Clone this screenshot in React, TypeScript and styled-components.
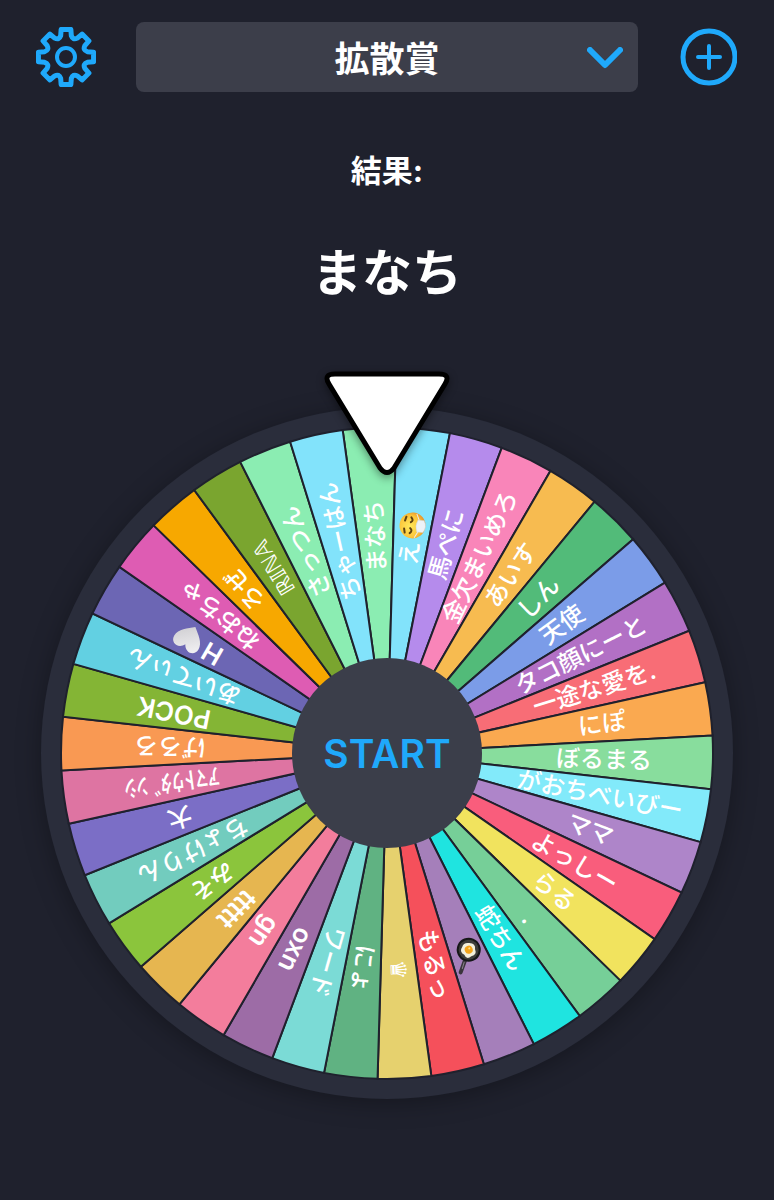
import React, { useState } from "react";
import styled, { createGlobalStyle } from "styled-components";

type Symbol = "mask" | "pan" | "heart";

interface Entry {
  label: string;
  color: string;
  symbol?: Symbol;
}

// clockwise, the first one is under the pointer
const entries: Entry[] = [
  { label: "まなち", color: "#8bedb2" },
  { label: "え", color: "#82e3fb", symbol: "mask" },
  { label: "馬ぺに", color: "#b58bec" },
  { label: "金欠まいめろ", color: "#f985b9" },
  { label: "あいす", color: "#f7bb50" },
  { label: "しん", color: "#52bb79" },
  { label: "天使", color: "#7b9ce8" },
  { label: "タコ顔にーと", color: "#b270c5" },
  { label: "一途な愛を.", color: "#f86d76" },
  { label: "にぽ", color: "#faa950" },
  { label: "ぼるまる", color: "#88dd9d" },
  { label: "がおちべいびー", color: "#82eafa" },
  { label: "ママ", color: "#ae85c9" },
  { label: "よっしー", color: "#f95d7c" },
  { label: "らる", color: "#f1e35e" },
  { label: ".", color: "#76cf98" },
  { label: "蛇ちん", color: "#1fe4e0" },
  { label: "", color: "#a57fba", symbol: "pan" },
  { label: "もるっ", color: "#f5505b" },
  { label: "♛", color: "#e6d16e" },
  { label: "にょ", color: "#60b282" },
  { label: "ワード", color: "#7bdbd6" },
  { label: "oxn", color: "#9d6ca6" },
  { label: "gn", color: "#f37d9c" },
  { label: "ttttt", color: "#e6b650" },
  { label: "みそ", color: "#8bc53c" },
  { label: "ちょけりん", color: "#72ccbe" },
  { label: "大", color: "#7b6ec6" },
  { label: "ｱﾏﾄｳﾀﾞﾝｼ", color: "#de74a2" },
  { label: "げろろ", color: "#f99953" },
  { label: "POCK", color: "#84b535" },
  { label: "あいてぃん", color: "#62d0e2" },
  { label: "H", color: "#6c66b4", symbol: "heart" },
  { label: "ねおちゃ", color: "#de5cb3" },
  { label: "ろぜ", color: "#f7a800" },
  { label: "ℝ𝕀ℕ𝔸", color: "#7aa52f" },
  { label: "さっつん", color: "#8bedb2" },
  { label: "ちゃーはん", color: "#82e3fb" },
];

const STEP = 360 / entries.length;
const OFFSET = 1.66;
const RADIUS = 326;
const LABEL_RADIUS = 217;

const point = (deg: number, r: number) => {
  const rad = ((deg - 90) * Math.PI) / 180;
  return `${(Math.cos(rad) * r).toFixed(2)} ${(Math.sin(rad) * r).toFixed(2)}`;
};

const MaskFace: React.FC = () => (
  <g>
    <circle r="13" fill="url(#face)" />
    <path
      d="M-8 -2 Q-5 1 -3 -2 M3 -2 Q5 1 8 -2 M-8 -7 L-4 -8 M4 -8 L8 -7"
      fill="none"
      stroke="#5e4312"
      strokeWidth="2"
      strokeLinecap="round"
    />
    <path d="M-12 3 L-6 6 M12 3 L6 6" stroke="#e8edf3" strokeWidth="1" />
    <path d="M-6 5 Q0 2 6 5 L6 11 Q0 15 -6 11 Z" fill="#eef2f7" stroke="#cdd4dc" strokeWidth="0.5" />
  </g>
);

const Heart: React.FC = () => (
  <path
    d="M0 13 C-6 8 -14 3 -14 -5 C-14 -13 -4 -15 0 -7 C4 -15 14 -13 14 -5 C14 3 6 8 0 13 Z"
    fill="url(#heart)"
  />
);

const FryingPan: React.FC = () => (
  <g>
    <path d="M4 5 L14 14" stroke="#3a353c" strokeWidth="4" strokeLinecap="round" />
    <path d="M6 7 L11 11" stroke="#88808a" strokeWidth="1" strokeLinecap="round" />
    <circle cx="-4" cy="-2" r="11" fill="#3d3d3a" stroke="#161718" strokeWidth="2" />
    <path
      d="M-10 -5 Q-7 -11 -2 -8 Q4 -8 3 -2 Q5 4 -1 4 Q-6 8 -9 3 Q-13 0 -10 -5 Z"
      fill="#f3f0dc"
    />
    <circle cx="-4" cy="-2" r="4" fill="#f2a51b" />
    <circle cx="-5" cy="-3" r="1" fill="#ffe08a" />
  </g>
);

const symbols: Record<Symbol, React.FC> = {
  mask: MaskFace,
  heart: Heart,
  pan: FryingPan,
};

type LabelKind = "kana" | "latin" | "glyph";

const labelKind = (label: string): LabelKind => {
  if (/^[A-Za-z]+$/.test(label)) return "latin";
  return label === "♛" || label === "ℝ𝕀ℕ𝔸" ? "glyph" : "kana";
};

const Slice: React.FC<{ entry: Entry; index: number }> = ({ entry, index }) => {
  const end = OFFSET + index * STEP;
  const start = end - STEP;
  const Icon = entry.symbol && symbols[entry.symbol];
  const paired = Icon !== undefined && entry.label !== "";

  return (
    <g>
      <SlicePath
        d={`M0 0 L${point(start, RADIUS)} A${RADIUS} ${RADIUS} 0 0 1 ${point(end, RADIUS)} Z`}
        fill={entry.color}
      />
      <g transform={`rotate(${start + STEP / 2 - 90}) translate(${LABEL_RADIUS} 0)`}>
        {entry.label && (
          <SliceLabel x={paired ? -16 : 0} y={-2} $kind={labelKind(entry.label)}>
            {entry.label}
          </SliceLabel>
        )}
        {Icon && (
          <g transform={`translate(${paired ? 12 : 0} 0)`}>
            <Icon />
          </g>
        )}
      </g>
    </g>
  );
};

const GearIcon: React.FC = () => {
  // eight flat teeth with round valleys between them
  const teeth = Array.from({ length: 8 }, (_, i) => {
    const a = i * 45;
    return `L${point(a - 10, 28)} L${point(a + 10, 28)} L${point(a + 14, 22)} Q${point(
      a + 22.5,
      18
    )} ${point(a + 31, 22)}`;
  });
  return (
    <svg viewBox="-30 -30 60 60" width="60" height="60" aria-hidden="true">
      <path
        d={`M${point(-14, 22)} ${teeth.join(" ")} Z`}
        fill="none"
        stroke="currentColor"
        strokeWidth="5"
        strokeLinejoin="round"
      />
      <circle r="9" fill="none" stroke="currentColor" strokeWidth="4" />
    </svg>
  );
};

const App: React.FC = () => {
  const [roulette, setRoulette] = useState("拡散賞");

  return (
    <Page>
      <GlobalStyle />
      <Toolbar>
        <IconButton aria-label="設定">
          <GearIcon />
        </IconButton>
        <SelectWrapper>
          <RouletteSelect
            aria-label="ルーレット"
            value={roulette}
            onChange={(e) => setRoulette(e.target.value)}
          >
            <option>拡散賞</option>
          </RouletteSelect>
          <Chevron viewBox="0 0 36 22" aria-hidden="true">
            <path d="M3 3 L18 18 L33 3" />
          </Chevron>
        </SelectWrapper>
        <IconButton aria-label="追加">
          <svg viewBox="-30 -29 58 58" width="58" height="58" aria-hidden="true">
            <g fill="none" stroke="currentColor" strokeLinecap="round">
              <circle r="26" strokeWidth="5" />
              <path d="M-11 0 H11 M0 -11 V11" strokeWidth="4" />
            </g>
          </svg>
        </IconButton>
      </Toolbar>
      <ResultTitle>結果:</ResultTitle>
      <ResultName>{entries[0].label}</ResultName>
      <Wheel>
        <WheelSvg viewBox="-346 -346 692 692">
          <defs>
            <radialGradient id="face" cx="0.45" cy="0.4" r="0.6">
              <stop offset="0" stopColor="#ffe95c" />
              <stop offset="0.7" stopColor="#fcc53a" />
              <stop offset="1" stopColor="#e8962a" />
            </radialGradient>
            <linearGradient id="heart" x1="0" y1="0" x2="1" y2="1">
              <stop offset="0" stopColor="#f4f3f5" />
              <stop offset="1" stopColor="#c9c8cc" />
            </linearGradient>
          </defs>
          <Rim r="346" />
          {entries.map((entry, i) => (
            <Slice key={i} entry={entry} index={i} />
          ))}
          <Pointer d="M-52 -379 H52 Q64 -379 58 -369 L7 -285 Q0 -276 -7 -285 L-58 -369 Q-64 -379 -52 -379 Z" />
        </WheelSvg>
        <StartButton>START</StartButton>
      </Wheel>
    </Page>
  );
};

export default App;

const GlobalStyle = createGlobalStyle`
  * {
    box-sizing: border-box;
  }
  body {
    margin: 0;
    min-height: 100vh;
    background-color: #1f212d;
    color: white;
    font-family: Inter, "Noto Sans CJK JP", sans-serif;
  }
`;

const Page = styled.main`
  display: flex;
  flex-direction: column;
  align-items: center;
`;

const Toolbar = styled.header`
  width: 100%;
  display: grid;
  grid-template-columns: 60px 1fr 60px;
  align-items: center;
  gap: 40px;
  padding: 22px 36px 0;
`;

const IconButton = styled.button`
  display: flex;
  justify-content: center;
  padding: 0;
  border: 0;
  background-color: transparent;
  color: #1fa9fb;
  cursor: pointer;
`;

const SelectWrapper = styled.div`
  position: relative;
`;

const RouletteSelect = styled.select`
  display: block;
  width: 100%;
  height: 70px;
  padding: 3px 0 0;
  border: 0;
  border-radius: 8px;
  appearance: none;
  background-color: #3c3e4a;
  color: white;
  font-family: inherit;
  font-size: 35px;
  font-weight: 700;
  text-align: center;
  text-align-last: center;
`;

const Chevron = styled.svg`
  position: absolute;
  right: 15px;
  top: 25px;
  width: 36px;
  height: 22px;
  pointer-events: none;

  path {
    fill: none;
    stroke: #1fa9fb;
    stroke-width: 6px;
    stroke-linecap: round;
    stroke-linejoin: round;
  }
`;

const ResultTitle = styled.h1`
  margin: 59px 0 0;
  font-size: 31px;
  line-height: 40px;
  font-weight: 700;
`;

const ResultName = styled.p`
  margin: 52px 0 0;
  font-size: 50px;
  line-height: 60px;
  font-weight: 700;
`;

const Wheel = styled.section`
  position: relative;
  width: 100%;
  margin-top: 104px;
  padding: 0 41px;
`;

const WheelSvg = styled.svg`
  display: block;
  width: 100%;
  overflow: visible;
`;

const Rim = styled.circle`
  fill: #2a2d3b;
  filter: drop-shadow(0 4px 12px rgba(0, 0, 0, 0.3));
`;

const SlicePath = styled.path`
  stroke: #1f212d;
  stroke-width: 2px;
`;

const labelSizes: Record<LabelKind, string> = {
  kana: "24px",
  latin: "26px",
  glyph: "22px",
};

const SliceLabel = styled.text<{ $kind: LabelKind }>`
  fill: white;
  font-family: ${({ $kind }) =>
    $kind === "latin"
      ? `Inter, sans-serif`
      : `"Noto Sans CJK JP", "DejaVu Sans", sans-serif`};
  font-size: ${({ $kind }) => labelSizes[$kind]};
  font-weight: ${({ $kind }) => ($kind === "latin" ? 600 : 500)};
  text-anchor: middle;
  dominant-baseline: central;
`;

const Pointer = styled.path`
  fill: white;
  stroke: black;
  stroke-width: 5px;
  stroke-linejoin: round;
  filter: drop-shadow(0 3px 4px rgba(0, 0, 0, 0.4));
`;

const StartButton = styled.button`
  position: absolute;
  left: 50%;
  top: 50%;
  width: 190px;
  height: 190px;
  transform: translate(-50%, -50%);
  padding: 0;
  border: 0;
  border-radius: 50%;
  background-color: #3b3e4a;
  color: #1fa9fb;
  font-family: inherit;
  font-size: 39px;
  font-weight: 600;
  cursor: pointer;
`;
